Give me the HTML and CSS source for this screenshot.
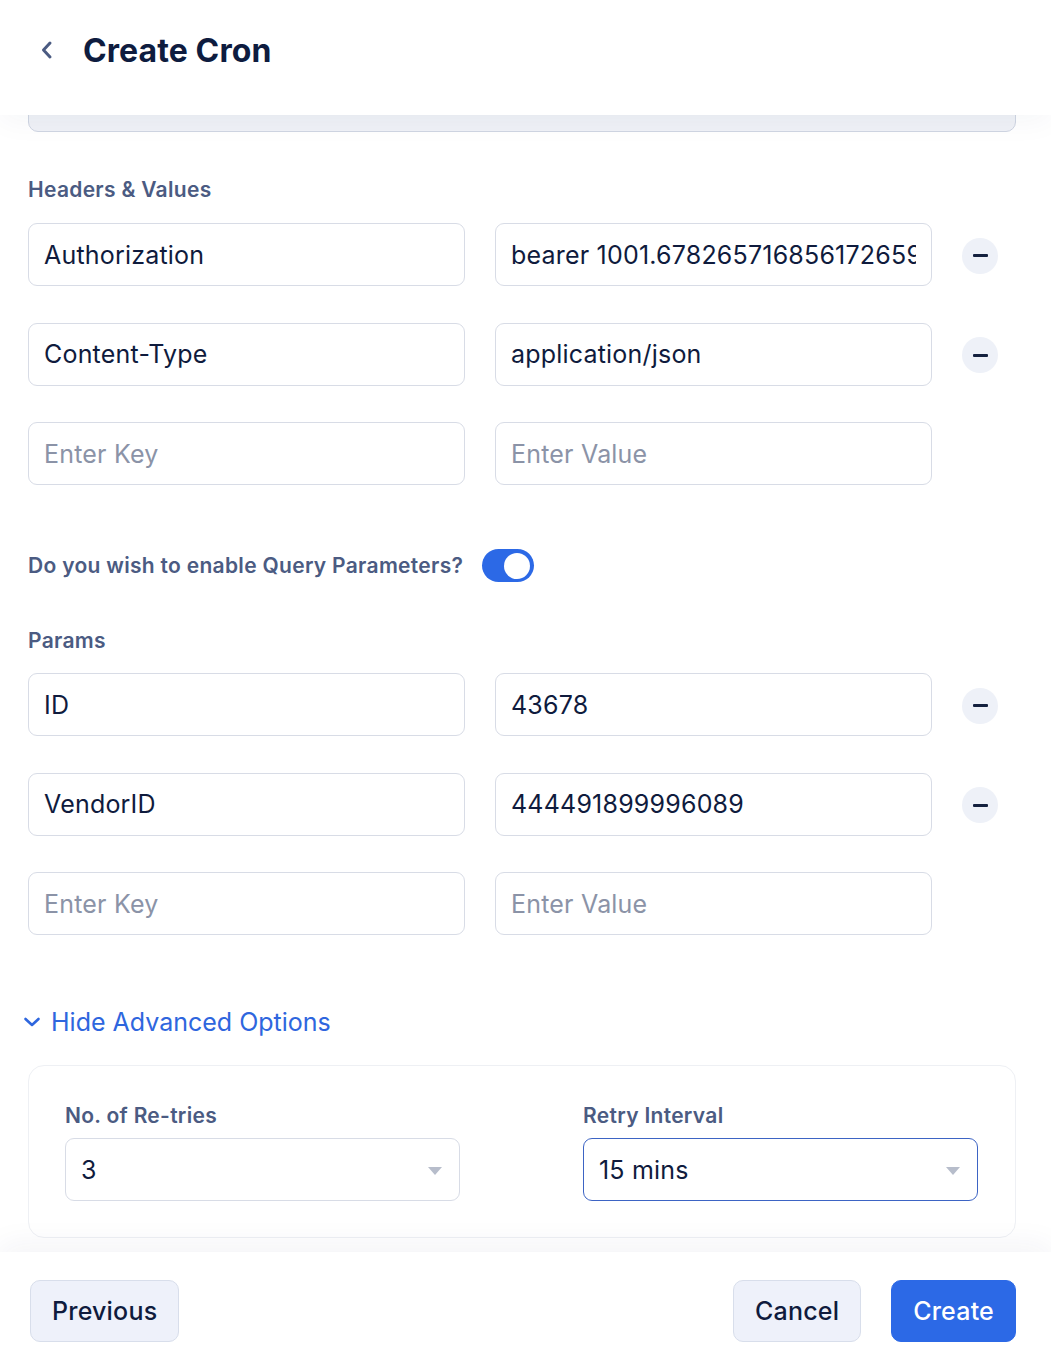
FILE: index.html
```html
<!DOCTYPE html>
<html lang="en">
<head>
<meta charset="utf-8">
<title>Create Cron</title>
<link rel="stylesheet" href="styles.css">
</head>
<body>
<div class="page">
  <header class="topbar">
    <button class="back" aria-label="Back">
      <svg width="14" height="20" viewBox="0 0 14 20"><path d="M10 3 L3.5 10 L10 17" fill="none" stroke="#4b5b82" stroke-width="3" stroke-linecap="round" stroke-linejoin="round"/></svg>
    </button>
    <h1 class="title">Create Cron</h1>
  </header>

  <main class="content">
    <div class="scroll">
      <div class="textarea-stub">Request Body</div>

      <h2 class="section-label first">Headers &amp; Values</h2>
      <div class="kv-list">
        <div class="kv-row">
          <input class="field" value="Authorization">
          <input class="field" value="bearer 1001.678265716856172659a84c0e7">
          <button class="remove" aria-label="Remove"><span></span></button>
        </div>
        <div class="kv-row">
          <input class="field" value="Content-Type">
          <input class="field" value="application/json">
          <button class="remove" aria-label="Remove"><span></span></button>
        </div>
        <div class="kv-row">
          <input class="field" placeholder="Enter Key">
          <input class="field" placeholder="Enter Value">
        </div>
      </div>

      <div class="toggle-row">
        <span class="section-label">Do you wish to enable Query Parameters?</span>
        <span class="toggle on"><span class="knob"></span></span>
      </div>

      <h2 class="section-label params">Params</h2>
      <div class="kv-list">
        <div class="kv-row">
          <input class="field" value="ID">
          <input class="field" value="43678">
          <button class="remove" aria-label="Remove"><span></span></button>
        </div>
        <div class="kv-row">
          <input class="field" value="VendorID">
          <input class="field" value="444491899996089">
          <button class="remove" aria-label="Remove"><span></span></button>
        </div>
        <div class="kv-row">
          <input class="field" placeholder="Enter Key">
          <input class="field" placeholder="Enter Value">
        </div>
      </div>

      <button class="advanced-toggle">
        <svg width="18" height="12" viewBox="0 0 18 12"><path d="M2.5 3 L9 9 L15.5 3" fill="none" stroke="#2e66de" stroke-width="2.6" stroke-linecap="round" stroke-linejoin="round"/></svg>
        <span>Hide Advanced Options</span>
      </button>

      <div class="advanced-card">
        <div class="adv-field">
          <label class="section-label">No. of Re-tries</label>
          <div class="select">
            <span>3</span>
            <span class="caret"></span>
          </div>
        </div>
        <div class="adv-field">
          <label class="section-label">Retry Interval</label>
          <div class="select focused">
            <span>15 mins</span>
            <span class="caret"></span>
          </div>
        </div>
      </div>
    </div>
  </main>

  <footer class="footer">
    <button class="btn secondary">Previous</button>
    <div class="footer-right">
      <button class="btn secondary">Cancel</button>
      <button class="btn primary">Create</button>
    </div>
  </footer>
</div>
</body>
</html>
```

FILE: styles.css
```css
* { box-sizing: border-box; }

html, body {
  margin: 0;
  padding: 0;
  background: #ffffff;
}

body {
  font-family: Inter, "Noto Sans", "Liberation Sans", sans-serif;
  color: #0f1b3d;
}

.page {
  width: 1051px;
  height: 1356px;
  display: flex;
  flex-direction: column;
  overflow: hidden;
}

/* Header */
.topbar {
  height: 115px;
  flex: none;
  display: flex;
  align-items: center;
  padding: 0 0 15px 37px;
  background: #ffffff;
  position: relative;
  z-index: 2;
  box-shadow: 0 6px 28px rgba(30, 45, 90, 0.045);
}

.back {
  border: 0;
  background: none;
  padding: 0;
  width: 20px;
  height: 24px;
  display: flex;
  align-items: center;
  justify-content: center;
  cursor: pointer;
}

.title {
  margin: 0 0 0 26px;
  font-size: 32px;
  font-weight: 700;
  letter-spacing: 0.1px;
  color: #0e1c3f;
}

/* Scroll content */
.content {
  flex: 1;
  overflow: hidden;
  position: relative;
  background: #ffffff;
}

.scroll {
  padding: 0 35px 0 28px;
  margin-top: -46px;
}

.textarea-stub {
  height: 63px;
  width: 988px;
  border: 1px solid #cfd5e2;
  border-radius: 10px;
  background: #eff1f6;
  color: #8b93a7;
  font-size: 25px;
  padding: 16px 16px;
}

.section-label {
  margin: 0;
  font-size: 21px;
  line-height: 24px;
  font-weight: 600;
  letter-spacing: 0.3px;
  color: #4b5b82;
}

h2.section-label.first {
  margin-top: 46px;
  margin-bottom: 21px;
}

h2.section-label.params {
  margin-top: 47px;
  margin-bottom: 20px;
}

.kv-list {
  display: flex;
  flex-direction: column;
  gap: 36.5px;
}

.kv-row {
  display: flex;
  align-items: center;
  gap: 30px;
}

.field {
  width: 437px;
  height: 63px;
  border: 1px solid #d8dce6;
  border-radius: 9px;
  background: #ffffff;
  padding: 0 15px;
  font-family: Inter, "Noto Sans", "Liberation Sans", sans-serif;
  font-size: 25px;
  letter-spacing: 0.2px;
  color: #0f1b3d;
  outline: none;
}

.field::placeholder {
  color: #8b93a7;
  opacity: 1;
}

.remove {
  width: 36px;
  height: 36px;
  border-radius: 50%;
  border: 0;
  background: #eef1f8;
  display: flex;
  align-items: center;
  justify-content: center;
  padding: 0;
  margin-top: 2px;
  cursor: pointer;
}

.remove span {
  display: block;
  width: 15px;
  height: 3px;
  border-radius: 1px;
  background: #14213f;
}

/* Toggle */
.toggle-row {
  display: flex;
  align-items: center;
  gap: 19px;
  margin-top: 64px;
}

.toggle {
  width: 52px;
  height: 33px;
  border-radius: 17px;
  background: #d8dce6;
  display: flex;
  align-items: center;
  padding: 0 4px;
}

.toggle.on {
  background: #2c69e6;
  justify-content: flex-end;
}

.knob {
  width: 26px;
  height: 26px;
  border-radius: 50%;
  background: #ffffff;
}

/* Advanced */
.advanced-toggle {
  margin-top: 72px;
  margin-left: -5px;
  border: 0;
  background: none;
  padding: 0;
  display: flex;
  align-items: center;
  gap: 10px;
  font-family: Inter, "Noto Sans", "Liberation Sans", sans-serif;
  font-size: 25px;
  line-height: 30px;
  color: #2e66de;
  cursor: pointer;
}

.advanced-card {
  margin-top: 28px;
  width: 988px;
  border: 1px solid #eef0f4;
  border-radius: 16px;
  padding: 38px 37px 36px 36px;
  display: grid;
  grid-template-columns: 395px 395px;
  column-gap: 123px;
}

.adv-field {
  display: flex;
  flex-direction: column;
  gap: 10px;
}

.select {
  height: 63px;
  border: 1px solid #d8dce6;
  border-radius: 9px;
  display: flex;
  align-items: center;
  justify-content: space-between;
  padding: 0 17px 0 15px;
  font-size: 25px;
  letter-spacing: 0.2px;
  color: #0f1b3d;
}

.select.focused {
  border-color: #3d64c4;
}

.caret {
  width: 0;
  height: 0;
  border-left: 7px solid transparent;
  border-right: 7px solid transparent;
  border-top: 8px solid #b7bdcb;
  margin-top: 2px;
}

/* Footer */
.footer {
  height: 104px;
  flex: none;
  display: flex;
  align-items: flex-start;
  justify-content: space-between;
  padding: 28px 35px 0 30px;
  background: #ffffff;
  position: relative;
  z-index: 2;
  box-shadow: 0 -8px 28px rgba(30, 45, 90, 0.05);
}

.footer-right {
  display: flex;
  gap: 30px;
}

.btn {
  height: 62px;
  padding: 0 21px;
  border-radius: 10px;
  font-family: Inter, "Noto Sans", "Liberation Sans", sans-serif;
  font-size: 25px;
  font-weight: 500;
  letter-spacing: 0.2px;
  cursor: pointer;
}

.btn.secondary {
  background: #eef1fa;
  border: 1px solid #d8deeb;
  color: #0f1b3d;
}

.btn.primary {
  background: #2c69e6;
  border: 1px solid #2c69e6;
  color: #ffffff;
}
```
